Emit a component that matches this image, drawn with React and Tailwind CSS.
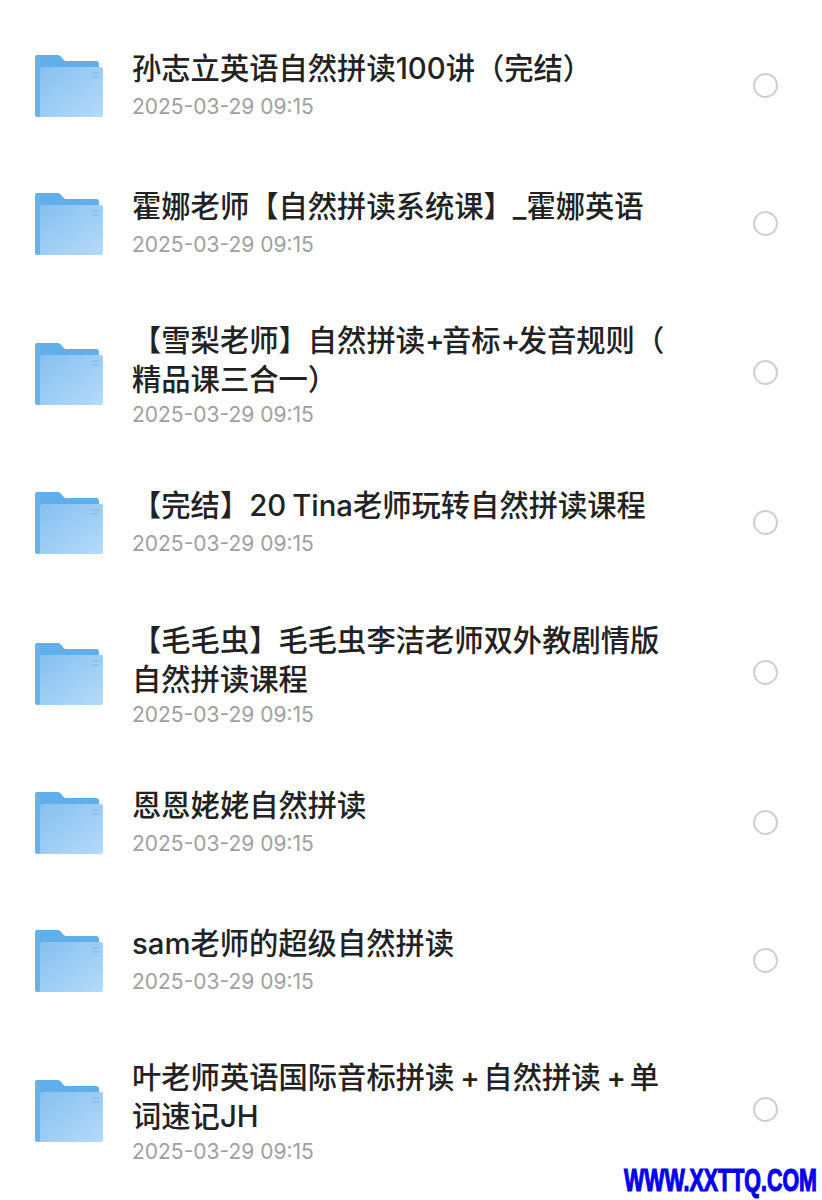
const DATE = "2025-03-29 09:15";

const folders = [
  { lines: ["孙志立英语自然拼读100讲（完结）"] },
  { lines: ["霍娜老师【自然拼读系统课】_霍娜英语"] },
  { lines: ["【雪梨老师】自然拼读+音标+发音规则（", "精品课三合一）"] },
  { lines: ["【完结】20 Tina老师玩转自然拼读课程"] },
  { lines: ["【毛毛虫】毛毛虫李洁老师双外教剧情版", "自然拼读课程"] },
  { lines: ["恩恩姥姥自然拼读"] },
  { lines: ["sam老师的超级自然拼读"] },
  { lines: ["叶老师英语国际音标拼读 + 自然拼读 + 单", "词速记JH"] },
];

function FolderIcon({ id }) {
  return (
    <svg width="70" height="66" viewBox="0 0 70 66" className="shrink-0">
      <defs>
        <linearGradient id={`front-${id}`} x1="0" y1="0" x2="1" y2="1">
          <stop offset="0" stopColor="#85bfef" />
          <stop offset="1" stopColor="#b4dbfb" />
        </linearGradient>
      </defs>
      <path
        d="M1 5a2 2 0 0 1 2-2h20c2 0 3 .6 4 1.800l2.500 3c.8 1 1.500 1.200 2.500 1.200h30a3 3 0 0 1 3 3v8H1z"
        fill="#60aeea"
      />
      <path d="M1 5h5v60H3a2 2 0 0 1-2-2z" fill="#68b2ec" />
      <path
        d="M6 17a2 2 0 0 1 2-2h59a2 2 0 0 1 2 2v46a2 2 0 0 1-2 2H3c2 0 3-1 3-2z"
        fill={`url(#front-${id})`}
      />
      <path d="M58 21h7M58 25h7" stroke="#7fb4e2" strokeWidth="1.200" />
    </svg>
  );
}

// the plus signs sit tighter in the original than in Inter
function TitleLine({ text }) {
  return text.split("+").map((part, i) => (
    <span key={i}>
      {i > 0 && <span className="tracking-[-2.500px]">+</span>}
      {part}
    </span>
  ));
}

function FolderRow({ id, lines }) {
  const twoLines = lines.length > 1;
  return (
    <div
      className={`flex items-center pl-[34px] pr-[44px] ${twoLines ? "h-[162.4px]" : "h-[137.4px]"}`}
    >
      <div className={`w-[98px] shrink-0 ${twoLines ? "mt-0" : "mt-[-1px]"}`}>
        <FolderIcon id={id} />
      </div>
      <div className={`flex-1 ${twoLines ? "mt-[4px]" : "mt-[-1px]"}`}>
        <div className="text-[29.300px] leading-[39px] font-medium text-[#222222] [word-spacing:-1.800px]">
          {lines.map((line) => (
            <div key={line} className="whitespace-nowrap">
              <TitleLine text={line} />
            </div>
          ))}
        </div>
        <div
          className={`text-[21px] leading-[28px] text-[#a0a0a0] ${twoLines ? "mt-[2px]" : "mt-[5px]"}`}
        >
          {DATE}
        </div>
      </div>
      <div className="w-[25px] h-[25px] shrink-0 rounded-full border-[2.500px] border-[#cfcfcf]" />
    </div>
  );
}

export default function App() {
  return (
    <div className="relative w-[822px] h-[1200px] overflow-hidden bg-white font-['Inter','Noto_Sans_CJK_SC',sans-serif] pt-[17px]">
      {folders.map((folder, i) => (
        <FolderRow key={i} id={i} lines={folder.lines} />
      ))}
      <div className="absolute left-[624px] top-[1162px] w-[193px] text-[#0000ee] text-[32px] leading-[36px] font-bold whitespace-nowrap font-['Liberation_Sans',sans-serif] origin-left scale-x-[0.67] [-webkit-text-stroke:1.200px_#0000ee]">
        WWW.XXTTQ.COM
      </div>
    </div>
  );
}
